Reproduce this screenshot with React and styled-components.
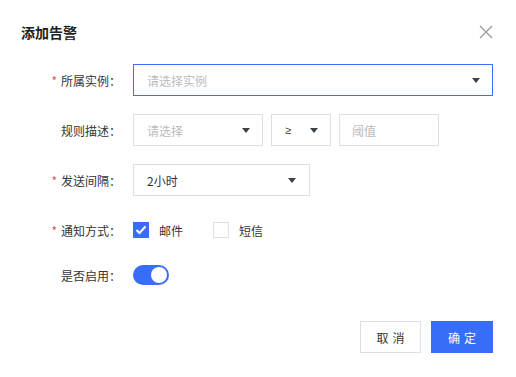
import React from "react";
import styled, { createGlobalStyle } from "styled-components";

const GlobalStyle = createGlobalStyle`
  html, body {
    margin: 0;
    padding: 0;
    background: #fff;
  }
  body {
    font-family: "Noto Sans CJK SC", "Noto Sans", sans-serif;
    font-size: 12px;
    color: #333;
  }
`;

const Dialog = styled.div`
  width: 516px;
  height: 377px;
  box-sizing: border-box;
  background: #fff;
  padding: 20px 23px 0 21px;
`;

const Header = styled.div`
  display: flex;
  align-items: center;
  justify-content: space-between;
  height: 24px;
  margin-bottom: 20px;
`;

const Title = styled.h3`
  margin: 0;
  font-size: 14px;
  font-weight: bold;
  color: #222;
  line-height: 24px;
`;

const Close = styled.button`
  border: none;
  background: none;
  padding: 0;
  width: 14px;
  height: 14px;
  display: flex;
  cursor: pointer;
`;

const Row = styled.div`
  display: flex;
  align-items: center;
  height: ${(p) => p.$h || 32}px;
  margin-bottom: ${(p) => p.$mb ?? 18}px;
`;

const Label = styled.label`
  width: 100px;
  flex-shrink: 0;
  margin-right: 12px;
  text-align: right;
  color: #333;
  font-size: 12px;
  white-space: nowrap;
`;

const Star = styled.span`
  color: #e34d59;
  margin-right: 4px;
`;

const Select = styled.div`
  box-sizing: border-box;
  width: ${(p) => p.$w}px;
  height: 32px;
  margin-right: ${(p) => p.$mr || 0}px;
  border: 1px solid ${(p) => (p.$focus ? "#3a6ff7" : "#dcdfe6")};
  display: flex;
  align-items: center;
  justify-content: space-between;
  padding: 0 ${(p) => p.$pr ?? 12}px 0 13px;
  color: ${(p) => (p.$placeholder ? "#bbb" : "#333")};
  font-size: 12px;
`;

const Symbol = styled.span`
  font-family: "Liberation Sans", Arial, sans-serif;
  font-size: 11px;
  color: #333;
`;

const Arrow = styled.span`
  width: 0;
  height: 0;
  border-left: 4px solid transparent;
  border-right: 4px solid transparent;
  border-top: 5px solid #3b414d;
`;

const Input = styled.input`
  box-sizing: border-box;
  width: 100px;
  height: 32px;
  border: 1px solid #dcdfe6;
  padding: 0 12px;
  font-family: inherit;
  font-size: 12px;
  outline: none;
  &::placeholder {
    color: #bbb;
  }
`;

const CheckItem = styled.div`
  display: flex;
  align-items: center;
  margin-right: 30px;
  color: #333;
`;

const Box = styled.span`
  box-sizing: border-box;
  width: 16px;
  height: 16px;
  margin-right: 10px;
  display: flex;
  align-items: center;
  justify-content: center;
  background: ${(p) => (p.$on ? "#386dfa" : "#fff")};
  border: 1px solid ${(p) => (p.$on ? "#386dfa" : "#dcdfe6")};
`;

const Switch = styled.span`
  position: relative;
  width: 36px;
  height: 20px;
  border-radius: 10px;
  background: #386dfa;
  &::after {
    content: "";
    position: absolute;
    right: 2px;
    top: 2px;
    width: 16px;
    height: 16px;
    border-radius: 50%;
    background: #fff;
  }
`;

const Footer = styled.div`
  display: flex;
  justify-content: flex-end;
  gap: 10px;
  margin-top: 30px;
`;

const Button = styled.button`
  box-sizing: border-box;
  height: 32px;
  width: ${(p) => p.$w}px;
  font-family: inherit;
  font-size: 12px;
  letter-spacing: 4px;
  padding: 0 0 0 4px;
  border: 1px solid ${(p) => (p.$primary ? "#386dfa" : "#dcdfe6")};
  background: ${(p) => (p.$primary ? "#386dfa" : "#fff")};
  color: ${(p) => (p.$primary ? "#fff" : "#333")};
  cursor: pointer;
`;

export default function App() {
  return (
    <>
      <GlobalStyle />
      <Dialog>
        <Header>
          <Title>添加告警</Title>
          <Close aria-label="close">
            <svg width="14" height="14" viewBox="0 0 14 14">
              <path d="M1 1 L13 13 M13 1 L1 13" stroke="#999" strokeWidth="1.2" />
            </svg>
          </Close>
        </Header>

        <Row>
          <Label><Star>*</Star>所属实例：</Label>
          <Select $w={360} $focus $placeholder>
            请选择实例
            <Arrow />
          </Select>
        </Row>

        <Row>
          <Label>规则描述：</Label>
          <Select $w={130} $mr={8} $placeholder>
            请选择
            <Arrow />
          </Select>
          <Select $w={60} $mr={8}>
            <Symbol>≥</Symbol>
            <Arrow />
          </Select>
          <Input placeholder="阈值" />
        </Row>

        <Row>
          <Label><Star>*</Star>发送间隔：</Label>
          <Select $w={177} $pr={13}>
            2小时
            <Arrow />
          </Select>
        </Row>

        <Row $mb={13}>
          <Label><Star>*</Star>通知方式：</Label>
          <CheckItem>
            <Box $on>
              <svg width="12" height="10" viewBox="0 0 12 10">
                <path d="M1.5 5 L4.5 8 L10.5 1.5" fill="none" stroke="#fff" strokeWidth="2" />
              </svg>
            </Box>
            邮件
          </CheckItem>
          <CheckItem>
            <Box />
            短信
          </CheckItem>
        </Row>

        <Row $mb={0}>
          <Label>是否启用：</Label>
          <Switch />
        </Row>

        <Footer>
          <Button $w={61}>取消</Button>
          <Button $w={62} $primary>确定</Button>
        </Footer>
      </Dialog>
    </>
  );
}
